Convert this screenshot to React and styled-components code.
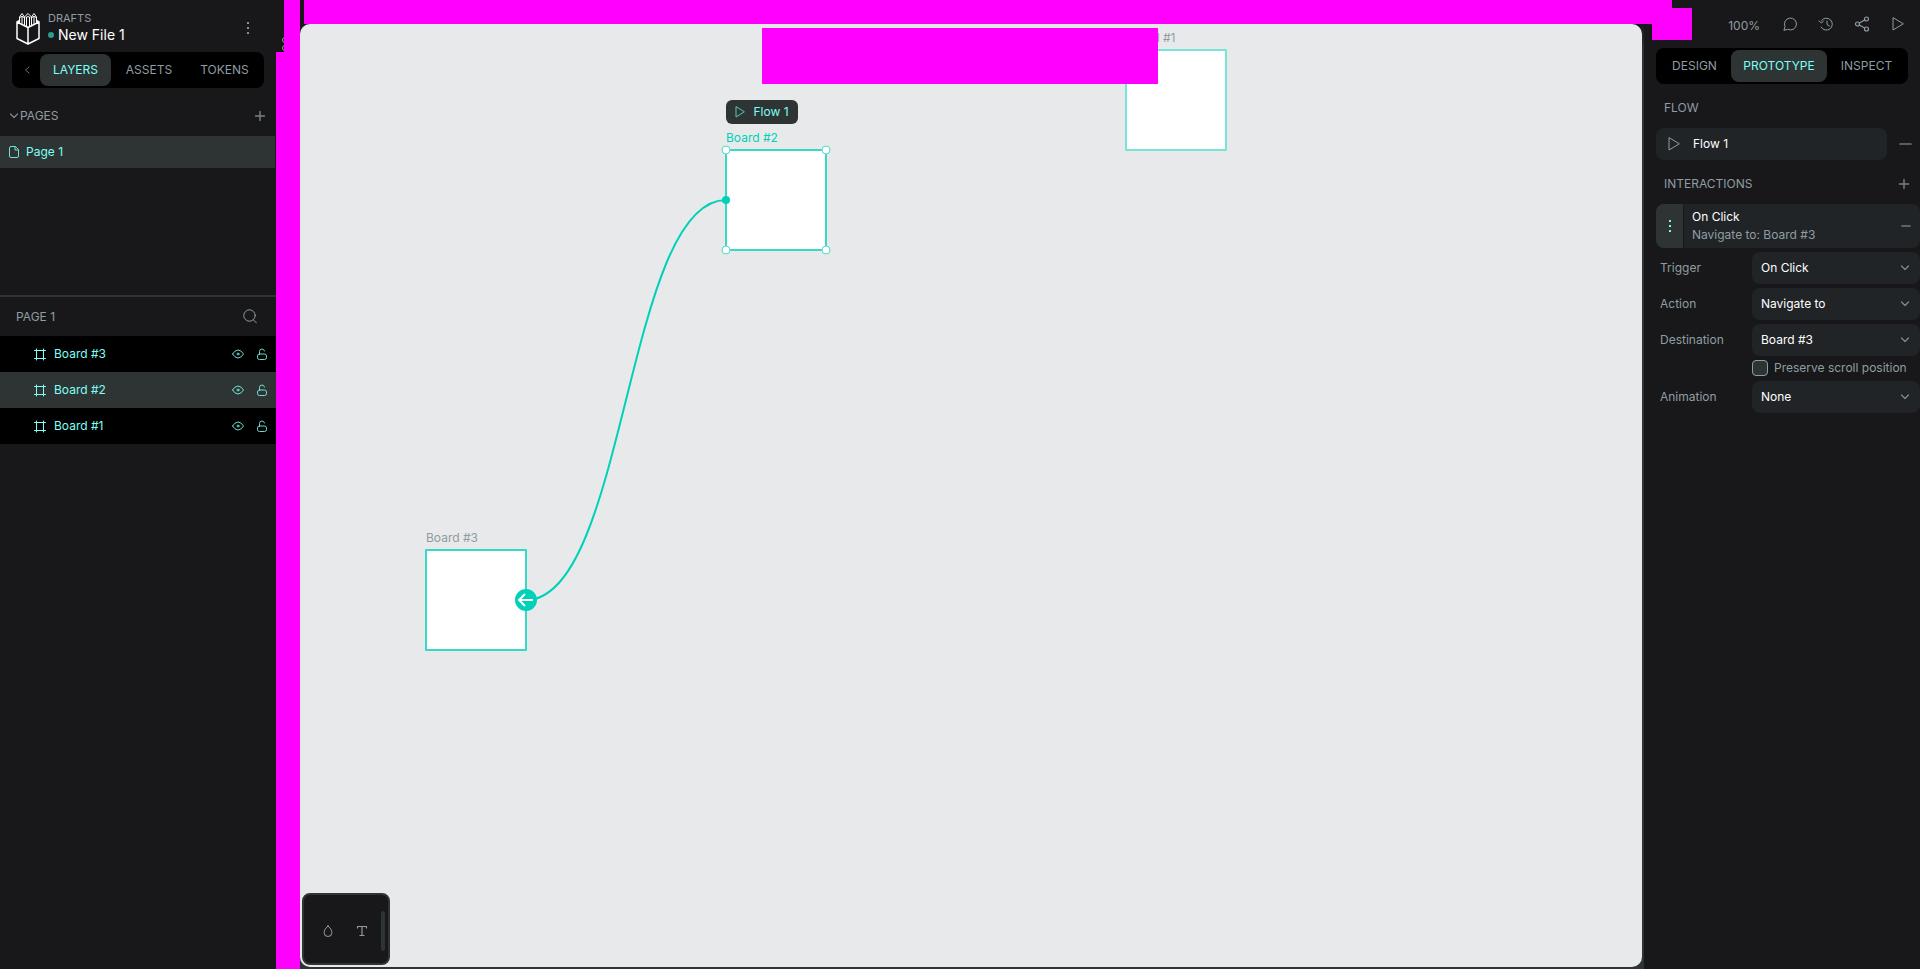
import React from "react";
import styled, { createGlobalStyle } from "styled-components";

const c = {
  panel: "#18181a",
  raised: "#2e3434",
  field: "#212426",
  text: "#8f9da3",
  bright: "#ffffff",
  mint: "#7efff5",
  teal: "#00d1b8",
  canvas: "#e8e9ea",
  cover: "#ff00ff",
};

const Global = createGlobalStyle`
  * { box-sizing: border-box; }
  body { margin: 0; background: ${c.panel}; }
  body, button, input, select {
    font-family: Inter, "Liberation Sans", sans-serif;
    font-size: 12px;
    line-height: 16px;
    color: ${c.text};
  }
  button, input, select { margin: 0; padding: 0; border: 0; background: none; outline: none; }
  button { cursor: pointer; }
  h1, h2, p, ul { margin: 0; padding: 0; font-size: inherit; font-weight: 400; }
  ul { list-style: none; }
  svg { display: block; flex: none; }
`;

const App = styled.div`
  display: flex;
  min-height: 100vh;
  background: ${c.panel};
`;

const Sidebar = styled.aside`
  width: 276px;
  flex: none;
  display: flex;
  flex-direction: column;
`;

const FileHeader = styled.header`
  height: 52px;
  display: flex;
  align-items: center;
  gap: 8px;
  padding: 4px 20px 0 16px;
`;

const FileInfo = styled.div`
  flex: 1;
  display: flex;
  flex-direction: column;
  padding-bottom: 2px;
`;

const Project = styled.span`
  font-size: 11px;
  line-height: 16px;
`;

const FileName = styled.h1`
  display: flex;
  align-items: center;
  gap: 4px;
  font-size: 14px;
  line-height: 18px;
  color: ${c.bright};
`;

const SavedDot = styled.i`
  width: 6px;
  height: 6px;
  border-radius: 50%;
  background: #2e9d8e;
`;

const IconButton = styled.button`
  display: flex;
  align-items: center;
  justify-content: center;
  width: ${(p) => p.$w || 16}px;
  height: 24px;
  flex: none;
`;

const Tabs = styled.nav`
  height: 36px;
  margin: 0 12px;
  padding: 2px;
  display: flex;
  align-items: center;
  background: #000;
  border-radius: 8px;
`;

const Tab = styled.button`
  flex: ${(p) => p.$grow} 1 0;
  height: 32px;
  border-radius: 8px;
  color: ${(p) => (p.$active ? c.mint : c.text)};
  background: ${(p) => (p.$active ? c.raised : "transparent")};
`;

const PagesHeader = styled.div`
  height: 32px;
  margin-top: 12px;
  padding: 0 8px 0 9px;
  display: flex;
  align-items: center;
  justify-content: space-between;
`;

const Toggle = styled.button`
  display: flex;
  align-items: center;
  gap: 1px;
`;

const Pages = styled.ul`
  height: 161px;
  margin-top: 4px;
  border-bottom: 2px solid ${c.raised};
`;

const PageItem = styled.li`
  height: 32px;
  margin-right: 1px;
  padding-left: 9px;
  display: flex;
  align-items: center;
  gap: 7px;
  color: ${c.mint};
  background: ${c.raised};
`;

const LayersHeader = styled.div`
  height: 39px;
  padding: 0 18px 0 16px;
  display: flex;
  align-items: center;
  justify-content: space-between;
`;

const Layer = styled.li`
  height: 36px;
  padding: 0 6px 0 33px;
  display: flex;
  align-items: center;
  gap: 8px;
  color: ${c.mint};
  background: ${(p) => (p.$selected ? c.raised : "#000")};
`;

const LayerName = styled.span`
  flex: 1;
`;

const SideRuler = styled.div`
  width: 24px;
  flex: none;
  display: flex;
  flex-direction: column;
`;

const SideRulerTop = styled.div`
  height: 52px;
  display: flex;
  justify-content: flex-end;
  align-items: center;
`;

const SideRulerCap = styled.div`
  width: 16px;
  height: 100%;
  background: ${c.cover};
`;

const RulerMark = styled.svg`
  margin-top: 36px;
`;

const SideRulerBody = styled.div`
  flex: 1;
  background: ${c.cover};
`;

const Workspace = styled.main`
  position: relative;
  z-index: 1;
  flex: 1;
  min-width: 0;
  display: flex;
  flex-direction: column;
`;

const TopRuler = styled.div`
  height: 24px;
  flex: none;
  margin: 0 -28px 0 4px;
  background: ${c.cover};
`;

const TopRulerEnd = styled.div`
  position: absolute;
  top: 8px;
  right: -48px;
  width: 40px;
  height: 32px;
  background: ${c.cover};
`;

const CanvasFrame = styled.div`
  flex: 1;
  display: flex;
  padding: 0 2px 2px 0;
  background: linear-gradient(${c.panel}, ${c.raised} 24px);
`;

const Canvas = styled.div`
  position: relative;
  flex: 1;
  overflow: hidden;
  border-radius: 10px;
  background: ${c.canvas};
`;

const CanvasCover = styled.div`
  position: absolute;
  left: 462px;
  top: 4px;
  width: 396px;
  height: 56px;
  background: ${c.cover};
`;

const Board = styled.div`
  position: absolute;
  left: ${(p) => p.$x - 1}px;
  top: ${(p) => p.$y - 1}px;
  width: 102px;
  height: 102px;
  border: 2px solid ${(p) => (p.$light ? "#7ae3d8" : "#36d8c6")};
  border-radius: 1px;
  background: #fff;
`;

const BoardLabel = styled.span`
  position: absolute;
  left: ${(p) => p.$x}px;
  top: ${(p) => p.$y - 20}px;
  color: ${(p) => (p.$active ? c.teal : c.text)};
`;

const Links = styled.svg`
  position: absolute;
  left: 0;
  top: 0;
`;

const FlowTag = styled.button`
  position: absolute;
  left: 426px;
  top: 76px;
  height: 24px;
  width: 72px;
  display: flex;
  align-items: center;
  justify-content: center;
  gap: 8px;
  border-radius: 6px;
  color: ${c.mint};
  background: ${c.raised};
`;

const Palette = styled.div`
  position: absolute;
  left: 2px;
  bottom: 2px;
  width: 88px;
  height: 72px;
  display: flex;
  align-items: center;
  padding: 4px 0 0 9px;
  gap: 4px;
  border: 2px solid ${c.raised};
  border-radius: 8px;
  background: ${c.panel};
`;

const PaletteScroll = styled.i`
  flex: none;
  width: 4px;
  height: 40px;
  border-radius: 2px;
  background: ${c.raised};
`;

const Actions = styled.div`
  height: 48px;
  display: flex;
  align-items: center;
  justify-content: flex-end;
  gap: 20px;
  padding-right: 14px;
`;

const Zoom = styled.button`
  margin-right: 2px;
  padding-top: 4px;
`;

const Section = styled.div`
  height: 32px;
  margin: 8px 0 4px;
  padding: 0 8px 0 20px;
  display: flex;
  align-items: center;
  justify-content: space-between;
`;

const FlowRow = styled.div`
  padding: 0 7px 0 12px;
  display: flex;
  align-items: center;
  gap: 10px;
`;

const FlowField = styled.label`
  flex: 1;
  min-width: 0;
  height: 32px;
  padding-left: 12px;
  display: flex;
  align-items: center;
  gap: 13px;
  border-radius: 8px;
  background: ${c.field};
`;

const FlowInput = styled.input`
  flex: 1;
  min-width: 0;
  color: ${c.bright};
`;

const Interaction = styled.div`
  height: 44px;
  margin: 0 0 4px 12px;
  padding-right: 8px;
  display: flex;
  align-items: center;
  border-radius: 8px;
  overflow: hidden;
  background: ${c.field};
`;

const Handle = styled.button`
  width: 28px;
  height: 44px;
  display: flex;
  align-items: center;
  justify-content: center;
  background: ${c.raised};
  border-right: 1px solid ${c.panel};
`;

const InteractionText = styled.div`
  flex: 1;
  padding-left: 8px;
  line-height: 18px;
`;

const Event = styled.p`
  color: ${c.bright};
`;

const Row = styled.div`
  display: grid;
  grid-template-columns: 92px 1fr;
  align-items: center;
  min-height: 32px;
  margin: 0 0 4px 16px;
`;

const SelectBox = styled.div`
  display: flex;
  align-items: center;
  height: 32px;
  padding-right: 10px;
  border-radius: 8px;
  background: ${c.field};
`;

const Select = styled.select`
  appearance: none;
  flex: 1;
  min-width: 0;
  height: 32px;
  padding-left: 9px;
  color: ${c.bright};
`;

const CheckRow = styled.label`
  display: flex;
  align-items: center;
  gap: 6px;
  height: 16px;
  margin: 0 0 5px 108px;
  white-space: nowrap;
`;

const Checkbox = styled.input`
  appearance: none;
  flex: none;
  width: 16px;
  height: 16px;
  border: 1px solid ${c.text};
  border-radius: 4px;
  background: ${c.raised};
`;

const Icon = ({ w = 16, h = w, color = c.text, children, ...rest }) => (
  <svg
    width={w}
    height={h}
    viewBox={`0 0 ${w} ${h}`}
    fill="none"
    stroke={color}
    strokeLinecap="round"
    strokeLinejoin="round"
    aria-hidden="true"
    {...rest}
  >
    {children}
  </svg>
);

const Logo = () => (
  <Icon w={24} h={33} color="#fff">
    <path strokeWidth="1.5" d="M1 10v16.500l11 5.500 11-5.500V10l-11 5.500zM12 15.500V32M1 10l2.500-1.500M23 10l-2.500-1.500" />
    <path strokeWidth="1" d="M3.500 11V5L6 1.500 8.500 5v8.500M8.500 5L12 1.500 15.500 5v8.500M15.500 5L18 1.500 20.500 5v6M6 5v7M10.500 5.500v9M13.500 5.500v9M18 5v7M3.500 5.500L6 4.500l2.500 1M10 5.500l2-1 2 1M15.500 5.500l2.500-1 2.500 1" />
  </Icon>
);

const Dots = ({ color = c.text }) => (
  <Icon w={4} h={14} stroke="none" fill={color}>
    {[1, 6, 11].map((y) => (
      <rect key={y} x="1" y={y} width="2" height="2" rx="0.500" />
    ))}
  </Icon>
);

const Plus = () => (
  <Icon w={12} strokeWidth="1.4" opacity="0.8"><path d="M6 1.500v9M1.500 6h9" /></Icon>
);
const Minus = ({ size = 12 }) => (
  <Icon w={size} h={4} strokeWidth="1.7" opacity="0.7"><path d={`M1 2h${size - 2}`} /></Icon>
);
const Play = ({ color, w = 12, h = 14 }) => (
  <Icon w={w} h={h} color={color}><path d={`M1 1v${h - 2}L${w - 1} ${h / 2}z`} /></Icon>
);
const Chevron = () => (
  <Icon w={10} h={6} strokeWidth="1.2" opacity="0.85"><path d="M1.500 1L5 4.500 8.500 1" /></Icon>
);
const PageIcon = () => (
  <Icon w={10} h={12} color={c.mint} opacity="0.85">
    <path d="M6 .5H2Q.5.5.5 2v8q0 1.500 1.500 1.500h6q1.500 0 1.500-1.500V4zM6 .5V4h3.500" />
  </Icon>
);
const BoardIcon = () => (
  <Icon w={13} color={c.mint}><path d="M3.500 1v11M10.500 1v11M1.500 2.500h11M1.500 10.500h11" /></Icon>
);
const Eye = () => (
  <Icon w={12} h={10} color={c.mint} opacity="0.85">
    <path d="M.5 5Q3 1 6 1t5.500 4Q9 9 6 9T.5 5z" /><circle cx="6" cy="5" r="1" />
  </Icon>
);
const Lock = () => (
  <Icon w={10} h={12} color={c.mint} opacity="0.85">
    <rect x=".5" y="6" width="9" height="5.500" rx="2" /><path d="M2.500 6V3.500Q2.500 1 5 1q2 0 2.500 2" />
  </Icon>
);
const Search = () => (
  <Icon w={14} h={15}><circle cx="6.500" cy="6.500" r="5.700" /><path d="M10.500 11L13.500 14" /></Icon>
);

const layers = ["Board #3", "Board #2", "Board #1"];
const handles = [[426, 126], [526, 126], [426, 226], [526, 226]];

const Property = ({ label, value }) => {
  const id = `prop-${label.toLowerCase()}`;
  return (
    <Row>
      <label htmlFor={id}>{label}</label>
      <SelectBox>
        <Select id={id} defaultValue={value}><option>{value}</option></Select>
        <Chevron />
      </SelectBox>
    </Row>
  );
};

export default function PrototypeEditor() {
  return (
    <App>
      <Global />
      <Sidebar>
        <FileHeader>
          <Logo />
          <FileInfo>
            <Project>DRAFTS</Project>
            <FileName><SavedDot />New File 1</FileName>
          </FileInfo>
          <IconButton aria-label="Menu"><Dots /></IconButton>
        </FileHeader>
        <Tabs>
          <IconButton $w={26} aria-label="Collapse">
            <Icon w={6} h={8} opacity="0.7"><path d="M5 1L1.500 4 5 7" /></Icon>
          </IconButton>
          <Tab $grow={71} $active>LAYERS</Tab>
          <Tab $grow={76}>ASSETS</Tab>
          <Tab $grow={75}>TOKENS</Tab>
        </Tabs>
        <PagesHeader>
          <Toggle><Chevron />PAGES</Toggle>
          <IconButton aria-label="Add page"><Plus /></IconButton>
        </PagesHeader>
        <Pages>
          <PageItem><PageIcon />Page 1</PageItem>
        </Pages>
        <LayersHeader>
          <h2>PAGE 1</h2>
          <IconButton aria-label="Search layers"><Search /></IconButton>
        </LayersHeader>
        <ul>
          {layers.map((name) => (
            <Layer key={name} $selected={name === "Board #2"}>
              <BoardIcon />
              <LayerName>{name}</LayerName>
              <IconButton aria-label="Toggle visibility"><Eye /></IconButton>
              <IconButton aria-label="Toggle lock"><Lock /></IconButton>
            </Layer>
          ))}
        </ul>
      </Sidebar>

      <SideRuler>
        <SideRulerTop>
          <RulerMark width="2" height="14" fill="none" stroke={c.text}>
            <circle cx="3" cy="3" r="2.500" /><circle cx="3" cy="11" r="2.500" />
          </RulerMark>
          <SideRulerCap />
        </SideRulerTop>
        <SideRulerBody />
      </SideRuler>

      <Workspace>
        <TopRuler />
        <TopRulerEnd />
        <CanvasFrame>
          <Canvas>
            <BoardLabel $x={826} $y={26}>Board #1</BoardLabel>
            <Board $x={826} $y={26} $light />
            <BoardLabel $x={426} $y={126} $active>Board #2</BoardLabel>
            <Board $x={426} $y={126} />
            <BoardLabel $x={126} $y={526}>Board #3</BoardLabel>
            <Board $x={126} $y={526} />
            <Links width="560" height="660" fill="none" stroke={c.teal}>
              <path d="M426 176C326 176 326 576 226 576" strokeWidth="2" />
              <circle cx="426" cy="176" r="4" fill={c.teal} stroke="none" />
              <circle cx="226" cy="576" r="11" fill={c.teal} stroke="none" />
              <path d="M233 576h-14M225 570l-6 6 6 6" stroke="#fff" strokeWidth="2" />
              {handles.map(([x, y]) => (
                <circle key={`${x}-${y}`} cx={x} cy={y} r="4" fill="#fff" stroke="#52dccc" />
              ))}
            </Links>
            <FlowTag><Play color="#5fc4bc" w={10} h={12} />Flow 1</FlowTag>
            <CanvasCover />
            <Palette>
              <IconButton $w={30} aria-label="Colors">
                <Icon w={12}><path d="M6 .8Q2 4.500 2 7.500a4 4 0 0 0 8 0Q10 4.500 6 .8z" /></Icon>
              </IconButton>
              <IconButton $w={30} aria-label="Typographies">
                <Icon w={12} strokeWidth="1.2"><path d="M1.500 3V1.500h9V3M6 1.500v9M4 10.500h4" /></Icon>
              </IconButton>
              <PaletteScroll />
            </Palette>
          </Canvas>
        </CanvasFrame>
      </Workspace>

      <Sidebar>
        <Actions>
          <Zoom>100%</Zoom>
          <IconButton aria-label="Comments">
            <Icon w={16}><path d="M2 14l1-3.500A6 6 0 1 1 6 13.500z" /></Icon>
          </IconButton>
          <IconButton aria-label="History">
            <Icon w={16}><path d="M3.500 4.500A6 6 0 1 1 3 11M1 5l2.500 2L5.500 5M9 5v3.500l2.500 1.500" /></Icon>
          </IconButton>
          <IconButton aria-label="Share">
            <Icon w={16} strokeWidth="1.2">
              <circle cx="12.500" cy="3" r="2" /><circle cx="3.500" cy="8" r="2" /><circle cx="12.500" cy="13" r="2" />
              <path d="M5.300 7L10.700 4M5.300 9l5.400 3" />
            </Icon>
          </IconButton>
          <IconButton aria-label="View mode"><Play /></IconButton>
        </Actions>
        <Tabs>
          <Tab $grow={73}>DESIGN</Tab>
          <Tab $grow={96} $active>PROTOTYPE</Tab>
          <Tab $grow={79}>INSPECT</Tab>
        </Tabs>
        <Section><h2>FLOW</h2></Section>
        <FlowRow>
          <FlowField>
            <Play />
            <FlowInput aria-label="Flow name" defaultValue="Flow 1" />
          </FlowField>
          <IconButton aria-label="Remove flow"><Minus size={13} /></IconButton>
        </FlowRow>
        <Section>
          <h2>INTERACTIONS</h2>
          <IconButton aria-label="Add interaction"><Plus /></IconButton>
        </Section>
        <Interaction>
          <Handle aria-label="Toggle options"><Dots color={c.mint} /></Handle>
          <InteractionText>
            <Event>On Click</Event>
            <p>Navigate to: Board #3</p>
          </InteractionText>
          <IconButton aria-label="Remove interaction" $w={12}><Minus size={10} /></IconButton>
        </Interaction>
        <Property label="Trigger" value="On Click" />
        <Property label="Action" value="Navigate to" />
        <Property label="Destination" value="Board #3" />
        <CheckRow><Checkbox type="checkbox" />Preserve scroll position</CheckRow>
        <Property label="Animation" value="None" />
      </Sidebar>
    </App>
  );
}
